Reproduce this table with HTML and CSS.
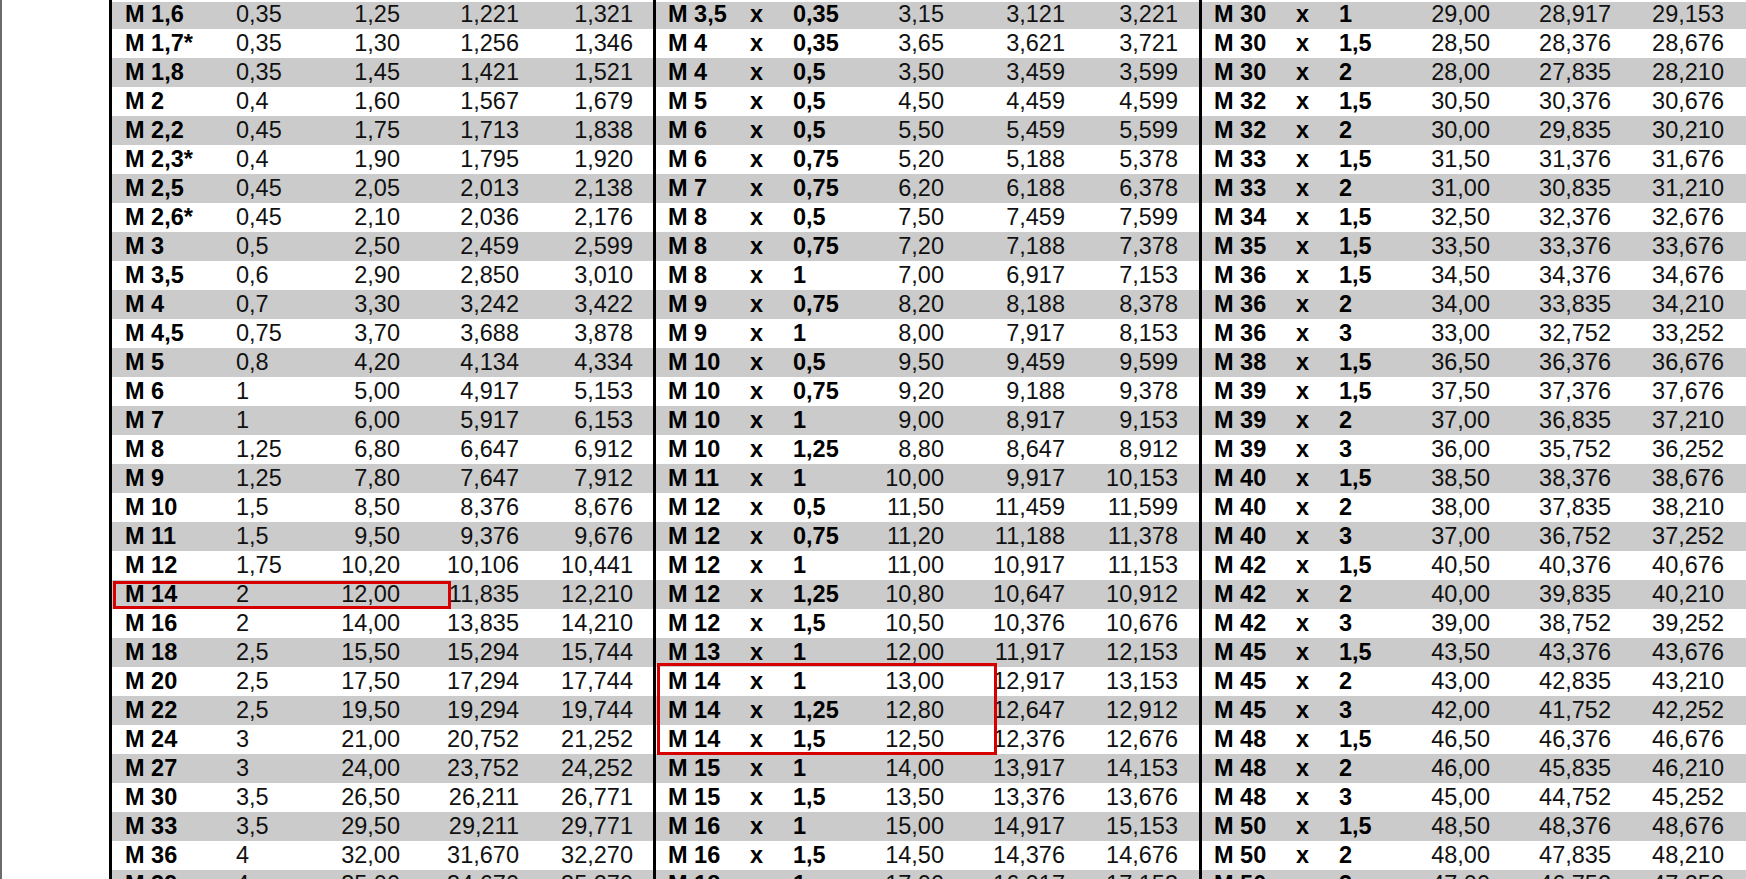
FILE: index.html
```html
<!DOCTYPE html>
<html lang="de">
<head>
<meta charset="utf-8">
<title>Gewindetabelle</title>
<link rel="stylesheet" href="styles.css">
</head>
<body>
<div class="page">
  <div class="edge"></div>
  <div class="sheet">
    <div class="sec sec1">
      <div class="row"><span class="b">M 1,6</span><span>0,35</span><span class="r">1,25</span><span class="r">1,221</span><span class="r">1,321</span></div>
      <div class="row"><span class="b">M 1,7*</span><span>0,35</span><span class="r">1,30</span><span class="r">1,256</span><span class="r">1,346</span></div>
      <div class="row"><span class="b">M 1,8</span><span>0,35</span><span class="r">1,45</span><span class="r">1,421</span><span class="r">1,521</span></div>
      <div class="row"><span class="b">M 2</span><span>0,4</span><span class="r">1,60</span><span class="r">1,567</span><span class="r">1,679</span></div>
      <div class="row"><span class="b">M 2,2</span><span>0,45</span><span class="r">1,75</span><span class="r">1,713</span><span class="r">1,838</span></div>
      <div class="row"><span class="b">M 2,3*</span><span>0,4</span><span class="r">1,90</span><span class="r">1,795</span><span class="r">1,920</span></div>
      <div class="row"><span class="b">M 2,5</span><span>0,45</span><span class="r">2,05</span><span class="r">2,013</span><span class="r">2,138</span></div>
      <div class="row"><span class="b">M 2,6*</span><span>0,45</span><span class="r">2,10</span><span class="r">2,036</span><span class="r">2,176</span></div>
      <div class="row"><span class="b">M 3</span><span>0,5</span><span class="r">2,50</span><span class="r">2,459</span><span class="r">2,599</span></div>
      <div class="row"><span class="b">M 3,5</span><span>0,6</span><span class="r">2,90</span><span class="r">2,850</span><span class="r">3,010</span></div>
      <div class="row"><span class="b">M 4</span><span>0,7</span><span class="r">3,30</span><span class="r">3,242</span><span class="r">3,422</span></div>
      <div class="row"><span class="b">M 4,5</span><span>0,75</span><span class="r">3,70</span><span class="r">3,688</span><span class="r">3,878</span></div>
      <div class="row"><span class="b">M 5</span><span>0,8</span><span class="r">4,20</span><span class="r">4,134</span><span class="r">4,334</span></div>
      <div class="row"><span class="b">M 6</span><span>1</span><span class="r">5,00</span><span class="r">4,917</span><span class="r">5,153</span></div>
      <div class="row"><span class="b">M 7</span><span>1</span><span class="r">6,00</span><span class="r">5,917</span><span class="r">6,153</span></div>
      <div class="row"><span class="b">M 8</span><span>1,25</span><span class="r">6,80</span><span class="r">6,647</span><span class="r">6,912</span></div>
      <div class="row"><span class="b">M 9</span><span>1,25</span><span class="r">7,80</span><span class="r">7,647</span><span class="r">7,912</span></div>
      <div class="row"><span class="b">M 10</span><span>1,5</span><span class="r">8,50</span><span class="r">8,376</span><span class="r">8,676</span></div>
      <div class="row"><span class="b">M 11</span><span>1,5</span><span class="r">9,50</span><span class="r">9,376</span><span class="r">9,676</span></div>
      <div class="row"><span class="b">M 12</span><span>1,75</span><span class="r">10,20</span><span class="r">10,106</span><span class="r">10,441</span></div>
      <div class="row"><span class="b">M 14</span><span>2</span><span class="r">12,00</span><span class="r">11,835</span><span class="r">12,210</span></div>
      <div class="row"><span class="b">M 16</span><span>2</span><span class="r">14,00</span><span class="r">13,835</span><span class="r">14,210</span></div>
      <div class="row"><span class="b">M 18</span><span>2,5</span><span class="r">15,50</span><span class="r">15,294</span><span class="r">15,744</span></div>
      <div class="row"><span class="b">M 20</span><span>2,5</span><span class="r">17,50</span><span class="r">17,294</span><span class="r">17,744</span></div>
      <div class="row"><span class="b">M 22</span><span>2,5</span><span class="r">19,50</span><span class="r">19,294</span><span class="r">19,744</span></div>
      <div class="row"><span class="b">M 24</span><span>3</span><span class="r">21,00</span><span class="r">20,752</span><span class="r">21,252</span></div>
      <div class="row"><span class="b">M 27</span><span>3</span><span class="r">24,00</span><span class="r">23,752</span><span class="r">24,252</span></div>
      <div class="row"><span class="b">M 30</span><span>3,5</span><span class="r">26,50</span><span class="r">26,211</span><span class="r">26,771</span></div>
      <div class="row"><span class="b">M 33</span><span>3,5</span><span class="r">29,50</span><span class="r">29,211</span><span class="r">29,771</span></div>
      <div class="row"><span class="b">M 36</span><span>4</span><span class="r">32,00</span><span class="r">31,670</span><span class="r">32,270</span></div>
      <div class="row"><span class="b">M 39</span><span>4</span><span class="r">35,00</span><span class="r">34,670</span><span class="r">35,270</span></div>
      <div class="mark mark1"></div>
    </div>
    <div class="sec sec2">
      <div class="row"><span class="b">M 3,5</span><span class="b">x</span><span class="b">0,35</span><span class="r">3,15</span><span class="r">3,121</span><span class="r">3,221</span></div>
      <div class="row"><span class="b">M 4</span><span class="b">x</span><span class="b">0,35</span><span class="r">3,65</span><span class="r">3,621</span><span class="r">3,721</span></div>
      <div class="row"><span class="b">M 4</span><span class="b">x</span><span class="b">0,5</span><span class="r">3,50</span><span class="r">3,459</span><span class="r">3,599</span></div>
      <div class="row"><span class="b">M 5</span><span class="b">x</span><span class="b">0,5</span><span class="r">4,50</span><span class="r">4,459</span><span class="r">4,599</span></div>
      <div class="row"><span class="b">M 6</span><span class="b">x</span><span class="b">0,5</span><span class="r">5,50</span><span class="r">5,459</span><span class="r">5,599</span></div>
      <div class="row"><span class="b">M 6</span><span class="b">x</span><span class="b">0,75</span><span class="r">5,20</span><span class="r">5,188</span><span class="r">5,378</span></div>
      <div class="row"><span class="b">M 7</span><span class="b">x</span><span class="b">0,75</span><span class="r">6,20</span><span class="r">6,188</span><span class="r">6,378</span></div>
      <div class="row"><span class="b">M 8</span><span class="b">x</span><span class="b">0,5</span><span class="r">7,50</span><span class="r">7,459</span><span class="r">7,599</span></div>
      <div class="row"><span class="b">M 8</span><span class="b">x</span><span class="b">0,75</span><span class="r">7,20</span><span class="r">7,188</span><span class="r">7,378</span></div>
      <div class="row"><span class="b">M 8</span><span class="b">x</span><span class="b">1</span><span class="r">7,00</span><span class="r">6,917</span><span class="r">7,153</span></div>
      <div class="row"><span class="b">M 9</span><span class="b">x</span><span class="b">0,75</span><span class="r">8,20</span><span class="r">8,188</span><span class="r">8,378</span></div>
      <div class="row"><span class="b">M 9</span><span class="b">x</span><span class="b">1</span><span class="r">8,00</span><span class="r">7,917</span><span class="r">8,153</span></div>
      <div class="row"><span class="b">M 10</span><span class="b">x</span><span class="b">0,5</span><span class="r">9,50</span><span class="r">9,459</span><span class="r">9,599</span></div>
      <div class="row"><span class="b">M 10</span><span class="b">x</span><span class="b">0,75</span><span class="r">9,20</span><span class="r">9,188</span><span class="r">9,378</span></div>
      <div class="row"><span class="b">M 10</span><span class="b">x</span><span class="b">1</span><span class="r">9,00</span><span class="r">8,917</span><span class="r">9,153</span></div>
      <div class="row"><span class="b">M 10</span><span class="b">x</span><span class="b">1,25</span><span class="r">8,80</span><span class="r">8,647</span><span class="r">8,912</span></div>
      <div class="row"><span class="b">M 11</span><span class="b">x</span><span class="b">1</span><span class="r">10,00</span><span class="r">9,917</span><span class="r">10,153</span></div>
      <div class="row"><span class="b">M 12</span><span class="b">x</span><span class="b">0,5</span><span class="r">11,50</span><span class="r">11,459</span><span class="r">11,599</span></div>
      <div class="row"><span class="b">M 12</span><span class="b">x</span><span class="b">0,75</span><span class="r">11,20</span><span class="r">11,188</span><span class="r">11,378</span></div>
      <div class="row"><span class="b">M 12</span><span class="b">x</span><span class="b">1</span><span class="r">11,00</span><span class="r">10,917</span><span class="r">11,153</span></div>
      <div class="row"><span class="b">M 12</span><span class="b">x</span><span class="b">1,25</span><span class="r">10,80</span><span class="r">10,647</span><span class="r">10,912</span></div>
      <div class="row"><span class="b">M 12</span><span class="b">x</span><span class="b">1,5</span><span class="r">10,50</span><span class="r">10,376</span><span class="r">10,676</span></div>
      <div class="row"><span class="b">M 13</span><span class="b">x</span><span class="b">1</span><span class="r">12,00</span><span class="r">11,917</span><span class="r">12,153</span></div>
      <div class="row"><span class="b">M 14</span><span class="b">x</span><span class="b">1</span><span class="r">13,00</span><span class="r">12,917</span><span class="r">13,153</span></div>
      <div class="row"><span class="b">M 14</span><span class="b">x</span><span class="b">1,25</span><span class="r">12,80</span><span class="r">12,647</span><span class="r">12,912</span></div>
      <div class="row"><span class="b">M 14</span><span class="b">x</span><span class="b">1,5</span><span class="r">12,50</span><span class="r">12,376</span><span class="r">12,676</span></div>
      <div class="row"><span class="b">M 15</span><span class="b">x</span><span class="b">1</span><span class="r">14,00</span><span class="r">13,917</span><span class="r">14,153</span></div>
      <div class="row"><span class="b">M 15</span><span class="b">x</span><span class="b">1,5</span><span class="r">13,50</span><span class="r">13,376</span><span class="r">13,676</span></div>
      <div class="row"><span class="b">M 16</span><span class="b">x</span><span class="b">1</span><span class="r">15,00</span><span class="r">14,917</span><span class="r">15,153</span></div>
      <div class="row"><span class="b">M 16</span><span class="b">x</span><span class="b">1,5</span><span class="r">14,50</span><span class="r">14,376</span><span class="r">14,676</span></div>
      <div class="row"><span class="b">M 18</span><span class="b">x</span><span class="b">1</span><span class="r">17,00</span><span class="r">16,917</span><span class="r">17,153</span></div>
      <div class="mark mark2"></div>
    </div>
    <div class="sec sec3">
      <div class="row"><span class="b">M 30</span><span class="b">x</span><span class="b">1</span><span class="r">29,00</span><span class="r">28,917</span><span class="r">29,153</span></div>
      <div class="row"><span class="b">M 30</span><span class="b">x</span><span class="b">1,5</span><span class="r">28,50</span><span class="r">28,376</span><span class="r">28,676</span></div>
      <div class="row"><span class="b">M 30</span><span class="b">x</span><span class="b">2</span><span class="r">28,00</span><span class="r">27,835</span><span class="r">28,210</span></div>
      <div class="row"><span class="b">M 32</span><span class="b">x</span><span class="b">1,5</span><span class="r">30,50</span><span class="r">30,376</span><span class="r">30,676</span></div>
      <div class="row"><span class="b">M 32</span><span class="b">x</span><span class="b">2</span><span class="r">30,00</span><span class="r">29,835</span><span class="r">30,210</span></div>
      <div class="row"><span class="b">M 33</span><span class="b">x</span><span class="b">1,5</span><span class="r">31,50</span><span class="r">31,376</span><span class="r">31,676</span></div>
      <div class="row"><span class="b">M 33</span><span class="b">x</span><span class="b">2</span><span class="r">31,00</span><span class="r">30,835</span><span class="r">31,210</span></div>
      <div class="row"><span class="b">M 34</span><span class="b">x</span><span class="b">1,5</span><span class="r">32,50</span><span class="r">32,376</span><span class="r">32,676</span></div>
      <div class="row"><span class="b">M 35</span><span class="b">x</span><span class="b">1,5</span><span class="r">33,50</span><span class="r">33,376</span><span class="r">33,676</span></div>
      <div class="row"><span class="b">M 36</span><span class="b">x</span><span class="b">1,5</span><span class="r">34,50</span><span class="r">34,376</span><span class="r">34,676</span></div>
      <div class="row"><span class="b">M 36</span><span class="b">x</span><span class="b">2</span><span class="r">34,00</span><span class="r">33,835</span><span class="r">34,210</span></div>
      <div class="row"><span class="b">M 36</span><span class="b">x</span><span class="b">3</span><span class="r">33,00</span><span class="r">32,752</span><span class="r">33,252</span></div>
      <div class="row"><span class="b">M 38</span><span class="b">x</span><span class="b">1,5</span><span class="r">36,50</span><span class="r">36,376</span><span class="r">36,676</span></div>
      <div class="row"><span class="b">M 39</span><span class="b">x</span><span class="b">1,5</span><span class="r">37,50</span><span class="r">37,376</span><span class="r">37,676</span></div>
      <div class="row"><span class="b">M 39</span><span class="b">x</span><span class="b">2</span><span class="r">37,00</span><span class="r">36,835</span><span class="r">37,210</span></div>
      <div class="row"><span class="b">M 39</span><span class="b">x</span><span class="b">3</span><span class="r">36,00</span><span class="r">35,752</span><span class="r">36,252</span></div>
      <div class="row"><span class="b">M 40</span><span class="b">x</span><span class="b">1,5</span><span class="r">38,50</span><span class="r">38,376</span><span class="r">38,676</span></div>
      <div class="row"><span class="b">M 40</span><span class="b">x</span><span class="b">2</span><span class="r">38,00</span><span class="r">37,835</span><span class="r">38,210</span></div>
      <div class="row"><span class="b">M 40</span><span class="b">x</span><span class="b">3</span><span class="r">37,00</span><span class="r">36,752</span><span class="r">37,252</span></div>
      <div class="row"><span class="b">M 42</span><span class="b">x</span><span class="b">1,5</span><span class="r">40,50</span><span class="r">40,376</span><span class="r">40,676</span></div>
      <div class="row"><span class="b">M 42</span><span class="b">x</span><span class="b">2</span><span class="r">40,00</span><span class="r">39,835</span><span class="r">40,210</span></div>
      <div class="row"><span class="b">M 42</span><span class="b">x</span><span class="b">3</span><span class="r">39,00</span><span class="r">38,752</span><span class="r">39,252</span></div>
      <div class="row"><span class="b">M 45</span><span class="b">x</span><span class="b">1,5</span><span class="r">43,50</span><span class="r">43,376</span><span class="r">43,676</span></div>
      <div class="row"><span class="b">M 45</span><span class="b">x</span><span class="b">2</span><span class="r">43,00</span><span class="r">42,835</span><span class="r">43,210</span></div>
      <div class="row"><span class="b">M 45</span><span class="b">x</span><span class="b">3</span><span class="r">42,00</span><span class="r">41,752</span><span class="r">42,252</span></div>
      <div class="row"><span class="b">M 48</span><span class="b">x</span><span class="b">1,5</span><span class="r">46,50</span><span class="r">46,376</span><span class="r">46,676</span></div>
      <div class="row"><span class="b">M 48</span><span class="b">x</span><span class="b">2</span><span class="r">46,00</span><span class="r">45,835</span><span class="r">46,210</span></div>
      <div class="row"><span class="b">M 48</span><span class="b">x</span><span class="b">3</span><span class="r">45,00</span><span class="r">44,752</span><span class="r">45,252</span></div>
      <div class="row"><span class="b">M 50</span><span class="b">x</span><span class="b">1,5</span><span class="r">48,50</span><span class="r">48,376</span><span class="r">48,676</span></div>
      <div class="row"><span class="b">M 50</span><span class="b">x</span><span class="b">2</span><span class="r">48,00</span><span class="r">47,835</span><span class="r">48,210</span></div>
      <div class="row"><span class="b">M 50</span><span class="b">x</span><span class="b">3</span><span class="r">47,00</span><span class="r">46,752</span><span class="r">47,252</span></div>
    </div>
  </div>
</div>
</body>
</html>
```

FILE: styles.css
```css
html, body {
  margin: 0;
  padding: 0;
  background: #fff;
  height: 879px;
  overflow: hidden;
}

.page {
  display: flex;
  height: 879px;
  overflow: hidden;
}

.edge {
  flex: none;
  width: 2px;
  background: #6b6b6b;
}

.sheet {
  flex: 1;
  display: flex;
  align-items: flex-start;
  margin-left: 107px;
  border-left: 3px solid #000;
  height: 910px;
}

.sec {
  position: relative;
  flex: none;
  height: 910px;
}

.sec1 {
  width: 541px;
  border-right: 3px solid #000;
}

.sec2 {
  width: 543px;
  border-right: 3px solid #000;
}

.sec3 {
  flex: 1;
}

.row {
  display: grid;
  height: 29.02px;
  line-height: 29.02px;
  font-family: "Liberation Sans", Arial, sans-serif;
  font-size: 23.5px;
  color: #111;
  white-space: nowrap;
}

.row:nth-child(odd) {
  background: #cbcbcb;
}

.row:first-child {
  background: linear-gradient(#fff 0 2px, #cbcbcb 2px);
}

.sec1 .row {
  padding-left: 13px;
  grid-template-columns: 111px 84px 80px 119px 114px;
}

.sec2 .row,
.sec3 .row {
  padding-left: 12px;
  grid-template-columns: 82px 43px 77px 74px 121px 113px;
}

.b {
  font-weight: bold;
  color: #000;
}

.r {
  text-align: right;
}

.mark {
  position: absolute;
  box-sizing: border-box;
  border: 3px solid #d60000;
}

.mark1 {
  left: 1px;
  top: 581px;
  width: 338px;
  height: 28px;
}

.mark2 {
  left: 1px;
  top: 663px;
  width: 340px;
  height: 92px;
}
```
